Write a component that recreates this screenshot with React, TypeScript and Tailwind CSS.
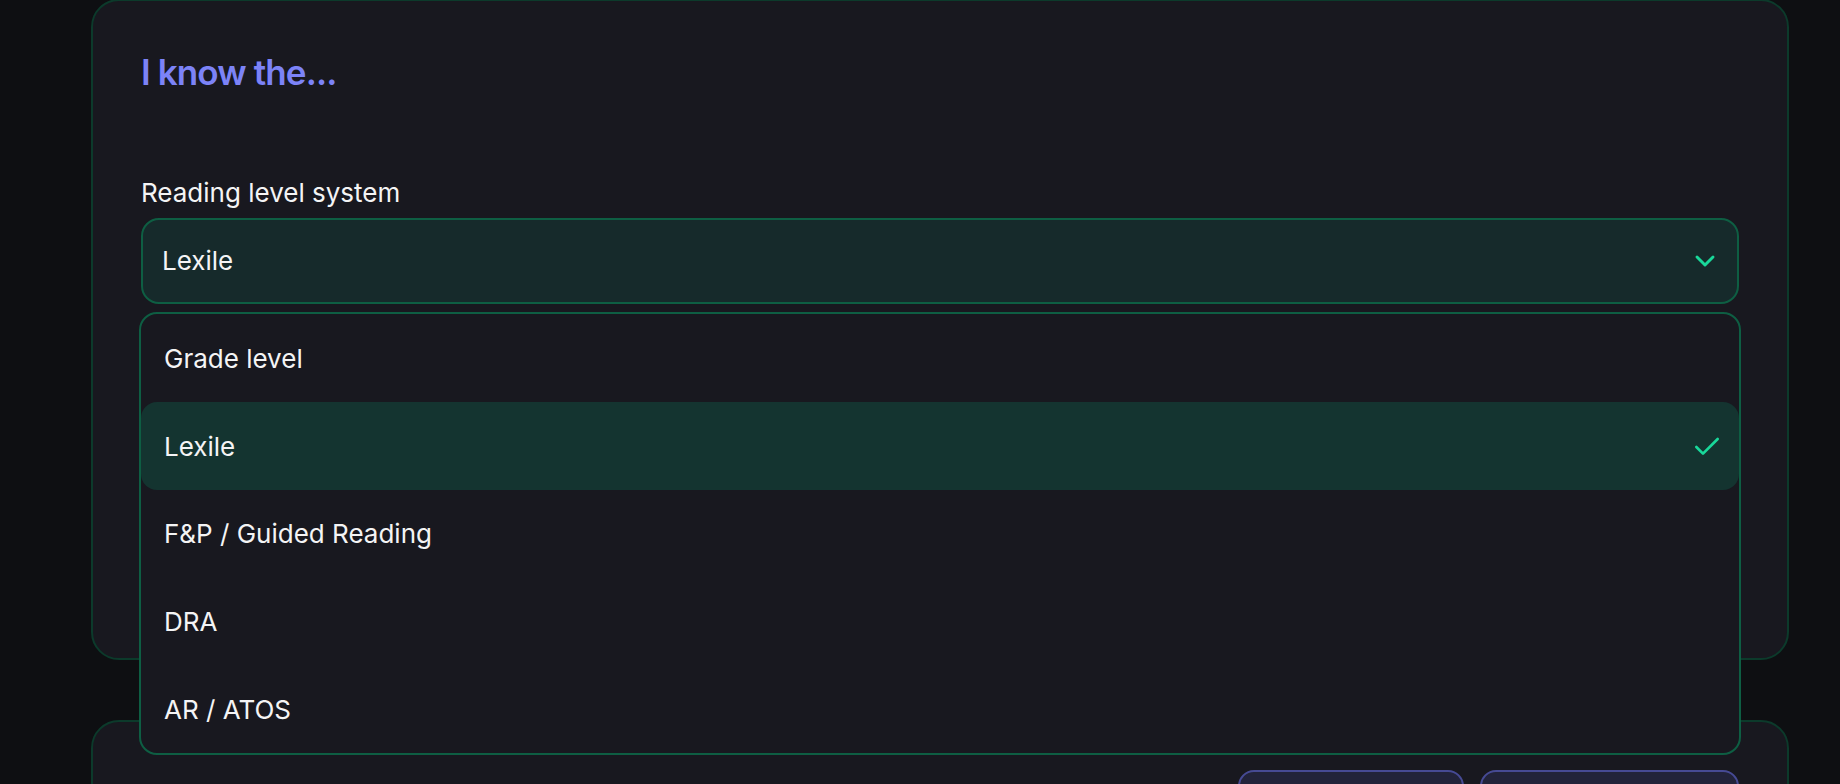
import { Check, ChevronDown } from 'lucide-react'

const options = ['Grade level', 'Lexile', 'F&P / Guided Reading', 'DRA', 'AR / ATOS']

const LevelSelect = ({ value }: { value: string }) => {
  return (
    <div className="relative mt-[7px]">
      <button className="flex h-[86px] w-full items-center justify-between rounded-[18px] border-2 border-[#0e5e43] bg-[#162a2b] pl-[19px] pr-4 text-left">
        <span className="text-[26px] leading-9 text-[#f4f4f5]">{value}</span>
        <ChevronDown className="text-[#19d89a]" size={32} strokeWidth={2.2} />
      </button>

      {/* open list */}
      <div className="absolute -left-[2px] -right-[2px] top-[calc(100%+8px)] z-20 rounded-[18px] border-2 border-[#0e5e43] bg-[#18181f]">
        {options.map((opt) => {
          const selected = opt === value
          return (
            <div
              key={opt}
              className={`flex h-[87.8px] items-center justify-between rounded-[16px] pl-[23px] pr-4 pt-[2px] ${
                selected ? 'bg-[#143430]' : ''
              }`}
            >
              <span className="text-[26px] leading-9 text-[#f4f4f5]">{opt}</span>
              {selected && <Check className="text-[#19d89a]" size={32} />}
            </div>
          )
        })}
      </div>
    </div>
  )
}

export default function App() {
  return (
    <div className="h-[784px] overflow-hidden bg-[#0e0f12] font-['Inter',sans-serif]">
      <div className="-mt-px ml-[91px] flex w-[1698px] flex-col gap-[60px]">
        {/* reading level card */}
        <section className="relative z-10 rounded-[28px] border-2 border-[#0c3a2b] bg-[#18181f] px-12 pt-[47px] pb-12">
          <h2 className="text-[35px] font-semibold leading-[48px] tracking-tight text-[#7c83f7]">I know the...</h2>

          <label className="mt-[79px] block text-[26px] leading-9 text-[#f4f4f5]">Reading level system</label>
          <LevelSelect value="Lexile" />

          {/* rest of the form sits under the open list */}
          <div className="h-[306px]" />
        </section>

        {/* second card */}
        <section className="rounded-[28px] border-2 border-[#0c3a2b] bg-[#18181f] px-12 pt-[48px] pb-12">
          <div className="flex items-start justify-between">
            <h2 className="mt-[10px] text-[35px] font-semibold leading-[48px] tracking-tight text-[#7c83f7]">and they like to read...</h2>
            <div className="flex gap-4">
              <button className="h-[88px] w-[226px] rounded-[16px] border-2 border-[#464a94] bg-[#22233a] pt-8 text-[22px] text-[#c7caff]">Pick genres</button>
              <button className="h-[88px] w-[259px] rounded-[16px] border-2 border-[#464a94] bg-[#22233a] pt-8 text-[22px] text-[#c7caff]">Add favorites</button>
            </div>
          </div>
        </section>
      </div>
    </div>
  )
}
